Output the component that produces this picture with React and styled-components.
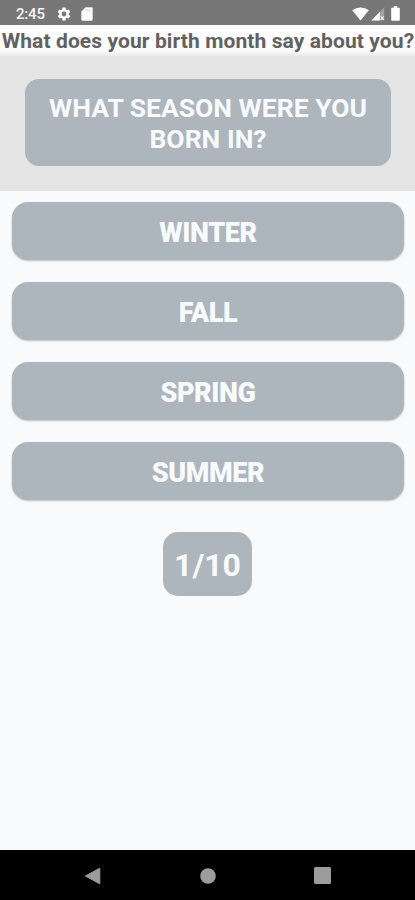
import React from "react";
import styled, { createGlobalStyle } from "styled-components";

const GlobalStyle = createGlobalStyle`
  * {
    box-sizing: border-box;
  }
  body {
    margin: 0;
    font-family: Roboto, "Liberation Sans", sans-serif;
    background: #f8fafc;
  }
`;

const answers = ["WINTER", "FALL", "SPRING", "SUMMER"];

function SettingsIcon() {
  return (
    <svg width="16" height="16" viewBox="0 0 24 24" fill="#fafafa">
      <path d="M19.14 12.94c.04-.3.06-.61.06-.94 0-.32-.02-.64-.07-.94l2.03-1.58a.49.49 0 0 0 .12-.61l-1.92-3.32a.49.49 0 0 0-.59-.22l-2.39.96c-.5-.38-1.03-.7-1.62-.94l-.36-2.54a.48.48 0 0 0-.48-.41h-3.84c-.24 0-.43.17-.47.41l-.36 2.54c-.59.24-1.13.57-1.62.94l-2.39-.96a.48.48 0 0 0-.59.22L2.74 8.87c-.12.21-.08.47.12.61l2.03 1.58c-.05.3-.09.63-.09.94s.02.64.07.94l-2.03 1.58a.49.49 0 0 0-.12.61l1.92 3.32c.12.22.37.29.59.22l2.39-.96c.5.38 1.03.7 1.62.94l.36 2.54c.05.24.24.41.48.41h3.84c.24 0 .44-.17.47-.41l.36-2.54c.59-.24 1.13-.56 1.62-.94l2.39.96c.22.08.47 0 .59-.22l1.92-3.32a.48.48 0 0 0-.12-.61l-2.01-1.58zM12 15.6A3.6 3.6 0 1 1 12 8.4a3.6 3.6 0 0 1 0 7.2z" />
    </svg>
  );
}

function CardIcon() {
  return (
    <svg width="12" height="14" viewBox="0 0 12 14">
      <path
        d="M4.6 0.3H10.6Q11.7 0.3 11.7 1.4V12.6Q11.7 13.7 10.6 13.7H1.4Q0.3 13.7 0.3 12.6V4.6Z"
        fill="#fafafa"
      />
      <path d="M4.8 2.2v2M6.8 2.2v2M8.8 2.2v2" stroke="#d5d5d5" strokeWidth="0.9" />
    </svg>
  );
}

function WifiIcon() {
  return (
    <svg width="17" height="14" viewBox="0 0 17 14">
      <path d="M8.5 13.6L0.2 3.3Q3.8 0.4 8.5 0.4T16.8 3.3Z" fill="#fff" />
    </svg>
  );
}

function SignalIcon() {
  return (
    <svg width="14" height="14" viewBox="0 0 14 14">
      <path d="M0.4 13.4L13.2 0.6V13.4Z" fill="#a2a2a2" />
      <path d="M0.4 13.4L8.8 5V13.4Z" fill="#fafafa" />
      <path d="M9.8 9.4l3 3.4M12.8 9.4l-3 3.4" stroke="#eee" strokeWidth="1.3" />
    </svg>
  );
}

function BatteryIcon() {
  return (
    <svg width="9" height="15" viewBox="0 0 9 15">
      <path
        d="M2.7 0.3H6.3V1.8H8Q8.8 1.8 8.8 2.6V13.9Q8.8 14.7 8 14.7H1Q0.2 14.7 0.2 13.9V2.6Q0.2 1.8 1 1.8H2.7Z"
        fill="#fff"
      />
    </svg>
  );
}

function App() {
  return (
    <Screen>
      <GlobalStyle />
      <StatusBar>
        <StatusGroup $gap={9.5}>
          <Clock>2:45</Clock>
          <SettingsIcon />
          <CardIcon />
        </StatusGroup>
        <StatusGroup $gap={1.5}>
          <WifiIcon />
          <SignalIcon />
          <BatteryWrap>
            <BatteryIcon />
          </BatteryWrap>
        </StatusGroup>
      </StatusBar>
      <Title>What does your birth month say about you?</Title>
      <QuestionPanel>
        <Question>
          WHAT SEASON WERE YOU
          <br />
          BORN IN?
        </Question>
      </QuestionPanel>
      <AnswerList>
        {answers.map((label) => (
          <AnswerButton key={label}>{label}</AnswerButton>
        ))}
      </AnswerList>
      <Counter>1/10</Counter>
      <NavBar>
        <svg width="17" height="18" viewBox="0 0 17 18">
          <path d="M1.4 9L15.8 1.2V16.8Z" fill="#9c9c9c" stroke="#9c9c9c" strokeLinejoin="round" />
        </svg>
        <svg width="16" height="16" viewBox="0 0 16 16">
          <circle cx="8" cy="8" r="7.8" fill="#9c9c9c" />
        </svg>
        <svg width="17" height="17" viewBox="0 0 17 17">
          <rect width="17" height="17" rx="1.5" fill="#9c9c9c" />
        </svg>
      </NavBar>
    </Screen>
  );
}

export default App;

const Screen = styled.div`
  display: flex;
  flex-direction: column;
  width: 415px;
  height: 900px;
  overflow: hidden;
  background: #f8fafc;
`;

const StatusBar = styled.header`
  display: flex;
  justify-content: space-between;
  align-items: center;
  height: 25px;
  padding: 2px 15px 0 16px;
  background: #777777;
`;

const StatusGroup = styled.div`
  display: flex;
  align-items: center;
  gap: ${(props) => props.$gap}px;
`;

const Clock = styled.span`
  width: 30px;
  font-size: 15px;
  line-height: 18px;
  font-weight: 500;
  letter-spacing: -0.2px;
  color: #f5f5f5;
`;

const BatteryWrap = styled.span`
  display: flex;
  margin-left: 5px;
`;

const Title = styled.h1`
  height: 31px;
  margin: 0;
  padding-left: 1px;
  font-size: 21px;
  line-height: 33px;
  font-weight: 700;
  letter-spacing: 0.1px;
  text-align: center;
  white-space: nowrap;
  color: #616161;
  background: linear-gradient(#fdfdfd 0, #fafafa 26px, #e8e8e8 31px);
`;

const QuestionPanel = styled.section`
  height: 134.5px;
  padding: 22.5px 24px 24px 25px;
  background: #e4e4e4;
`;

const Question = styled.div`
  height: 87.5px;
  padding-top: 13.5px;
  border-radius: 14px;
  font-size: 26.5px;
  line-height: 31px;
  font-weight: 700;
  text-align: center;
  white-space: nowrap;
  color: #f8fafc;
  background: #adb5bd;
`;

const AnswerList = styled.div`
  display: flex;
  flex-direction: column;
  gap: 22px;
  padding: 11.7px 11px 0 12px;
`;

const AnswerButton = styled.button`
  height: 58px;
  padding: 3px 0 0;
  border: none;
  border-radius: 16px;
  font-family: inherit;
  font-size: 27px;
  line-height: 32px;
  font-weight: 900;
  letter-spacing: -0.4px;
  color: #f8fafc;
  background: #adb5bd;
  box-shadow: 0 1px 2px rgba(0, 0, 0, 0.25);
`;

const Counter = styled.div`
  width: 89px;
  height: 64px;
  margin: 31.8px 0 0 163px;
  border-radius: 15px;
  font-size: 32px;
  line-height: 67px;
  font-weight: 700;
  text-align: center;
  color: #f8fafc;
  background: #adb5bd;
`;

const NavBar = styled.nav`
  display: flex;
  align-items: center;
  justify-content: space-between;
  height: 50px;
  margin-top: auto;
  padding: 1px 84px 0;
  background: #000;
`;
